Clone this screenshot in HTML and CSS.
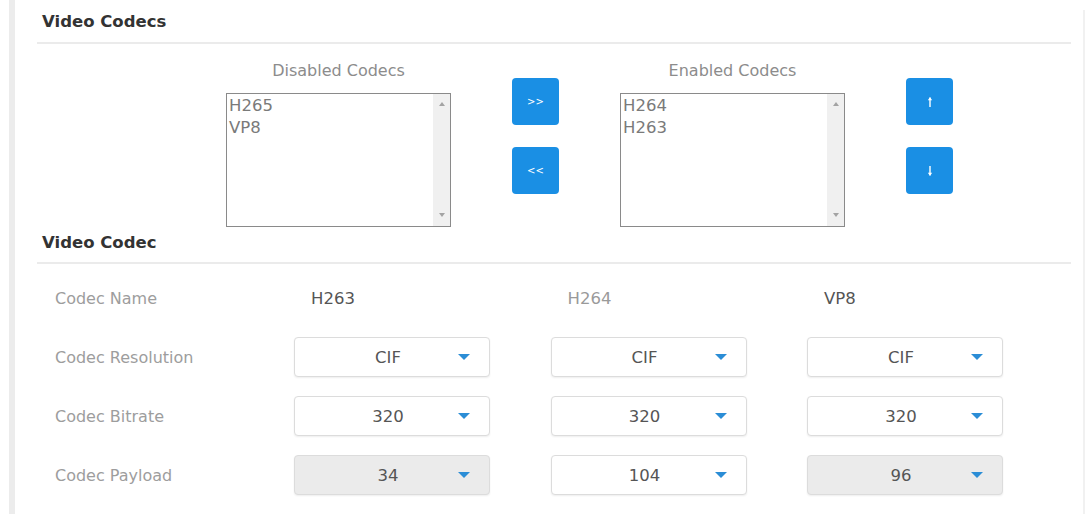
FILE: index.html
```html
<!DOCTYPE html>
<html lang="en">
<head>
<meta charset="utf-8">
<title>Video Codecs</title>
<link rel="stylesheet" href="styles.css">
</head>
<body>
<div class="page">
  <div class="rail"></div>
  <main class="content">
    <h2 class="section-title">Video Codecs</h2>
    <div class="codec-lists">
      <div class="list-group">
        <div class="list-label">Disabled Codecs</div>
        <div class="listbox">
          <div class="list-items">
            <div class="list-item">H265</div>
            <div class="list-item">VP8</div>
          </div>
          <div class="scrollbar"><span class="sb-arrow sb-up"></span><span class="sb-arrow sb-down"></span></div>
        </div>
      </div>
      <div class="btn-col">
        <button class="btn">&gt;&gt;</button>
        <button class="btn">&lt;&lt;</button>
      </div>
      <div class="list-group list-group--wide">
        <div class="list-label">Enabled Codecs</div>
        <div class="listbox">
          <div class="list-items">
            <div class="list-item">H264</div>
            <div class="list-item">H263</div>
          </div>
          <div class="scrollbar"><span class="sb-arrow sb-up"></span><span class="sb-arrow sb-down"></span></div>
        </div>
      </div>
      <div class="btn-col">
        <button class="btn"><svg width="8" height="12" viewBox="0 0 8 12"><path d="M4 1.5V11" stroke="#fff" stroke-width="1.4" fill="none"/><path d="M1.8 4.2L4 1.2L6.2 4.2Z" fill="#fff"/></svg></button>
        <button class="btn"><svg width="8" height="12" viewBox="0 0 8 12"><path d="M4 1V10.5" stroke="#fff" stroke-width="1.4" fill="none"/><path d="M1.8 7.8L4 10.8L6.2 7.8Z" fill="#fff"/></svg></button>
      </div>
    </div>

    <h2 class="section-title section-title--second">Video Codec</h2>
    <div class="codec-grid">
      <div class="row-label">Codec Name</div>
      <div class="codec-name">H263</div>
      <div class="codec-name codec-name--light">H264</div>
      <div class="codec-name">VP8</div>

      <div class="row-label">Codec Resolution</div>
      <div class="select"><span class="select-value">CIF</span><span class="caret"></span></div>
      <div class="select"><span class="select-value">CIF</span><span class="caret"></span></div>
      <div class="select"><span class="select-value">CIF</span><span class="caret"></span></div>

      <div class="row-label">Codec Bitrate</div>
      <div class="select"><span class="select-value">320</span><span class="caret"></span></div>
      <div class="select"><span class="select-value">320</span><span class="caret"></span></div>
      <div class="select"><span class="select-value">320</span><span class="caret"></span></div>

      <div class="row-label">Codec Payload</div>
      <div class="select select--disabled"><span class="select-value">34</span><span class="caret"></span></div>
      <div class="select"><span class="select-value">104</span><span class="caret"></span></div>
      <div class="select select--disabled"><span class="select-value">96</span><span class="caret"></span></div>
    </div>
  </main>
  <div class="edge"></div>
</div>
</body>
</html>
```

FILE: styles.css
```css
* { box-sizing: border-box; }

html, body {
  margin: 0;
  padding: 0;
  background: #ffffff;
}

body {
  font-family: "DejaVu Sans", "Liberation Sans", sans-serif;
  color: #555;
  width: 1087px;
  height: 514px;
  overflow: hidden;
}

.page {
  display: flex;
  height: 514px;
}

.rail {
  width: 6px;
  margin-left: 9px;
  background: #ececec;
  flex: none;
}

.content {
  margin-left: 22px;
  width: 1034px;
  flex: none;
}

.edge {
  margin-left: 12px;
  margin-top: 10px;
  width: 2px;
  background: #f1f1f1;
  flex: none;
}

.section-title {
  margin: 0;
  padding: 12px 0 10px 5px;
  font-size: 16.5px;
  line-height: 20px;
  font-weight: bold;
  color: #333;
  border-bottom: 2px solid #ebebeb;
}

.section-title--second {
  padding-top: 6px;
  padding-bottom: 9px;
}

/* codec lists */
.codec-lists {
  display: flex;
  align-items: flex-start;
  column-gap: 61px;
  padding: 17px 0 0 189px;
}

.list-group {
  width: 225px;
  display: flex;
  flex-direction: column;
}

.list-label {
  font-size: 16px;
  line-height: 20px;
  text-align: center;
  color: #8c8c8c;
}

.listbox {
  margin-top: 12px;
  height: 134px;
  border: 1px solid #8a8a8a;
  display: flex;
  background: #fff;
}

.list-items {
  flex: 1;
  padding: 1px 0 0 2px;
}

.list-item {
  font-size: 16.5px;
  line-height: 22px;
  color: #7a7a7a;
}

.scrollbar {
  width: 17px;
  background: #f0f0f0;
  display: flex;
  flex-direction: column;
  justify-content: space-between;
  align-items: center;
  padding: 8px 0 9px;
}

.sb-arrow {
  width: 0;
  height: 0;
  border-left: 3.5px solid transparent;
  border-right: 3.5px solid transparent;
}

.sb-up { border-bottom: 4px solid #a3a3a3; }
.sb-down { border-top: 4px solid #a3a3a3; }

.btn-col {
  margin-top: 17px;
  display: flex;
  flex-direction: column;
  row-gap: 22px;
}

.btn {
  width: 47px;
  height: 47px;
  border: none;
  border-radius: 4px;
  background: #1a8fe4;
  color: #fff;
  font-family: "DejaVu Sans", sans-serif;
  font-size: 10px;
  padding: 0;
  display: flex;
  align-items: center;
  justify-content: center;
}

/* codec grid */
.codec-grid {
  display: grid;
  grid-template-columns: 178.5px 196px 196px 196px;
  grid-auto-rows: 40px;
  column-gap: 60.5px;
  row-gap: 19px;
  padding: 14px 0 0 18px;
}

.row-label {
  align-self: center;
  font-size: 16px;
  color: #9d9d9d;
}

.codec-name {
  align-self: center;
  padding-left: 17px;
  font-size: 16.5px;
  color: #555;
}

.codec-name--light {
  color: #9a9a9a;
}

.select {
  position: relative;
  display: flex;
  align-items: center;
  border: 1px solid #dcdcdc;
  border-radius: 4px;
  background: #fff;
  box-shadow: 0 1px 2px rgba(0, 0, 0, 0.07);
  padding-right: 8px;
}

.select--disabled {
  background: #ebebeb;
}

.select-value {
  flex: 1;
  text-align: center;
  font-size: 16.5px;
  color: #555;
}

.caret {
  position: absolute;
  right: 19px;
  top: 50%;
  margin-top: -3px;
  width: 0;
  height: 0;
  border-left: 6px solid transparent;
  border-right: 6px solid transparent;
  border-top: 6px solid #2b8dd6;
}
```
